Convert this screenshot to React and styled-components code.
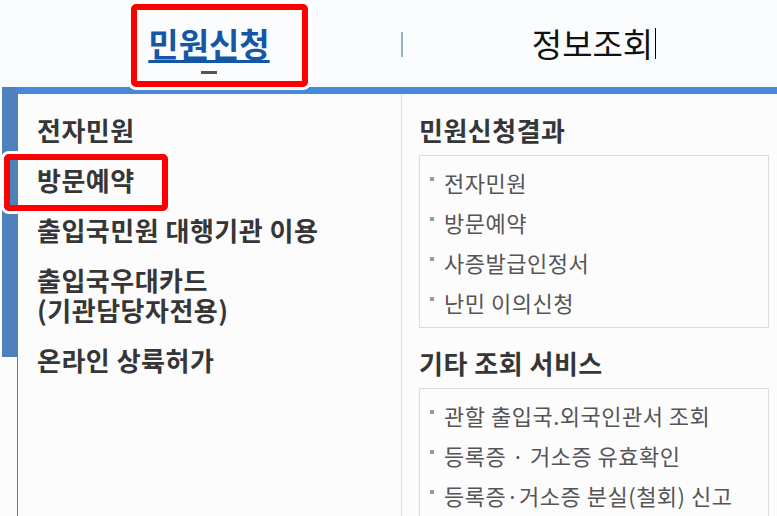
import React from 'react'
import styled, { createGlobalStyle } from 'styled-components'

const GlobalStyle = createGlobalStyle`
  body {
    margin: 0;
    background: #fcfcfc;
    font-family: "Noto Sans CJK KR", "Noto Sans", sans-serif;
    overflow: hidden;
  }
`

const Page = styled.div`
  position: relative;
  width: 777px;
  height: 516px;
  overflow: hidden;
`

const Nav = styled.div`
  display: flex;
  align-items: flex-start;
  height: 87px;
  padding-left: 17px;
  background: linear-gradient(#fbfcfd 85%, #f7f9fa);
`

const Tab = styled.div`
  width: ${(p) => (p.active ? '384px' : 'auto')};
  flex: ${(p) => (p.active ? 'none' : '1')};
  display: flex;
  flex-direction: column;
  align-items: center;
  padding-top: 23px;
  padding-left: ${(p) => (p.active ? '0' : '8px')};
`

const TabLabel = styled.span`
  font-size: ${(p) => (p.active ? '33px' : '33px')};
  font-weight: ${(p) => (p.active ? 700 : 400)};
  line-height: 40px;
  color: ${(p) => (p.active ? '#1457a6' : '#111')};
  text-decoration: ${(p) => (p.active ? 'underline' : 'none')};
  text-decoration-thickness: 3px;
  text-underline-offset: 3px;
  display: flex;
  align-items: center;
`

const Indicator = styled.span`
  width: 16px;
  height: 3px;
  margin-top: 8px;
  background: #555;
`

const Caret = styled.span`
  width: 1px;
  height: 31px;
  margin-left: 2px;
  background: #000;
`

const Divider = styled.span`
  width: 2px;
  height: 25px;
  margin-top: 32px;
  background: #8fb5bf;
`

const Body = styled.div`
  display: flex;
  align-items: flex-start;
`

const SideBlock = styled.div`
  width: 15px;
  height: 270px;
  margin-left: 2px;
  background: #4f81bd;
`

const Panel = styled.div`
  flex: 1;
  display: flex;
  min-height: 429px;
  border-top: 7px solid #448ad6;
  border-left: 1px solid #4f81bd;
`

const LeftCol = styled.div`
  width: 383px;
  padding: 21px 0 0 19px;
  box-sizing: border-box;
`

const MenuItem = styled.div`
  font-size: 26px;
  font-weight: 700;
  line-height: 30px;
  color: #363636;
  margin-bottom: 20px;
  letter-spacing: 0.5px;
`

const RightCol = styled.div`
  flex: 1;
  border-left: 1px solid #dcdcdc;
  padding: 21px 8px 0 17px;
`

const Heading = styled.div`
  font-size: 26px;
  font-weight: 700;
  line-height: 30px;
  color: #363636;
  letter-spacing: 0.5px;
  margin: ${(p) => (p.first ? '0' : '20px')} 0 10px;
`

const LinkBox = styled.ul`
  list-style: none;
  margin: 0;
  padding: 6px 10px 5px;
  border: 1px solid #dcdcdc;
`

const LinkItem = styled.li`
  display: flex;
  align-items: center;
  height: 40px;
  font-size: 22px;
  letter-spacing: 0.5px;
  color: #555;

  &::before {
    content: '';
    flex: none;
    width: 4px;
    height: 4px;
    margin: -7px 10px 0 0;
    background: #9a9a9a;
  }
`

const Highlight = styled.div`
  position: absolute;
  left: ${(p) => p.x}px;
  top: ${(p) => p.y}px;
  width: ${(p) => p.w}px;
  height: ${(p) => p.h}px;
  box-sizing: border-box;
  border: 6px solid #ff0000;
  border-radius: 5px;
  box-shadow: 0 0 0 3px #fff;
`

const results = ['전자민원', '방문예약', '사증발급인정서', '난민 이의신청']
const others = [
  '관할 출입국.외국인관서 조회',
  '등록증 · 거소증 유효확인',
  '등록증·거소증 분실(철회) 신고',
]

export default function App() {
  return (
    <Page>
      <GlobalStyle />
      <Nav>
        <Tab active>
          <TabLabel active>민원신청</TabLabel>
          <Indicator />
        </Tab>
        <Divider />
        <Tab>
          <TabLabel>
            정보조회
            <Caret />
          </TabLabel>
        </Tab>
      </Nav>
      <Body>
        <SideBlock />
        <Panel>
          <LeftCol>
            <MenuItem>전자민원</MenuItem>
            <MenuItem>방문예약</MenuItem>
            <MenuItem>출입국민원 대행기관 이용</MenuItem>
            <MenuItem>
              출입국우대카드
              <br />
              (기관담당자전용)
            </MenuItem>
            <MenuItem>온라인 상륙허가</MenuItem>
          </LeftCol>
          <RightCol>
            <Heading first>민원신청결과</Heading>
            <LinkBox>
              {results.map((r) => (
                <LinkItem key={r}>{r}</LinkItem>
              ))}
            </LinkBox>
            <Heading>기타 조회 서비스</Heading>
            <LinkBox>
              {others.map((r) => (
                <LinkItem key={r}>{r}</LinkItem>
              ))}
            </LinkBox>
          </RightCol>
        </Panel>
      </Body>
      <Highlight x={131} y={4} w={177} h={83} />
      <Highlight x={4} y={154} w={164} h={57} />
    </Page>
  )
}
